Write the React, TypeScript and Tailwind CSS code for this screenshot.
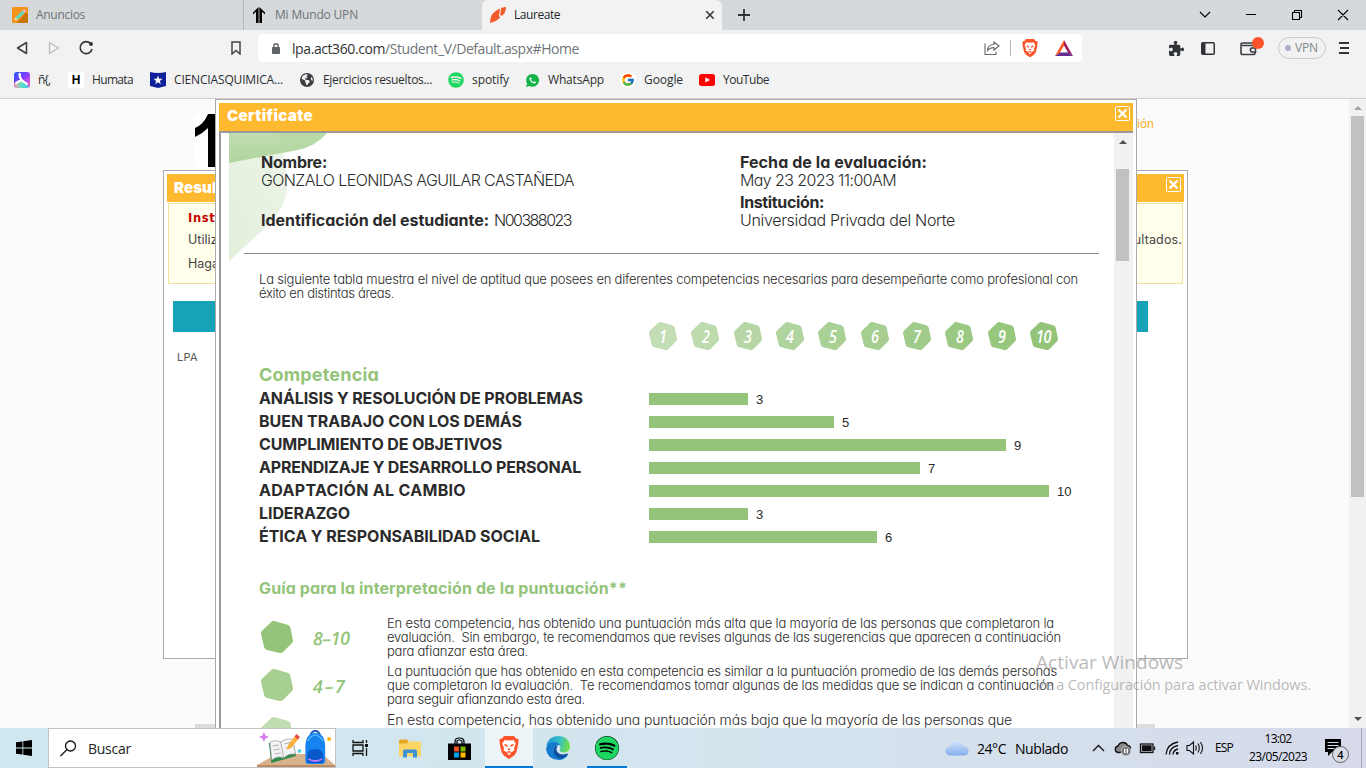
import { useLayoutEffect, useRef, type ReactNode } from "react";
import { FaPuzzlePiece, FaSpotify, FaEarthAmericas } from "react-icons/fa6";
import { IoLogoWhatsapp } from "react-icons/io";
import { FcGoogle } from "react-icons/fc";

/* Text set to a fixed measure: spacing between letters is computed from the natural width. */
function Fit({ w, className = "", children }: { w: number; className?: string; children: string }) {
  const ref = useRef<HTMLSpanElement>(null);
  useLayoutEffect(() => {
    const el = ref.current;
    if (!el) return;
    el.style.letterSpacing = "0px";
    const natural = el.getBoundingClientRect().width;
    el.style.letterSpacing = `${(w - natural) / children.length}px`;
  }, [w, children]);
  return (
    <span ref={ref} className={`inline-block w-max shrink-0 whitespace-pre ${className}`}>
      {children}
    </span>
  );
}

const UI = "font-['Open_Sans',sans-serif]";
const GEO = "font-['Inter',sans-serif] [font-feature-settings:'cv11']";

function BraveLion({ size }: { size: number }) {
  return (
    <svg width={size} height={size * 1.15} viewBox="0 0 20 23">
      <path d="M5 0h10l2 2.500 2.500.5-.3 5-1.700 8-2.200 3.500L10 23l-5.300-3.500L2.500 16 .8 8 .5 3 3 2.500z" fill="#fb542b" />
      <path d="M5.500 4l3 .6L10 4.300l1.500.3 3-.6 2.300 3.700-1.800 4.200.5 2.300-3.200 2L10 19.500l-2.300-3.300-3.200-2 .5-2.300L3.200 7.700z" fill="#fff" />
      <path d="M5 8l3.300.8.500 2.200-2.800-.9zM15 8l-3.300.8-.5 2.200 2.800-.9zM8.300 13l1.700-.8 1.700.8-1.700 1.500zM7.500 16l2.500-1 2.500 1-2.500 1.300z" fill="#fb542b" />
    </svg>
  );
}

function CloseX() {
  return (
    <svg width="15" height="15" viewBox="0 0 15 15" fill="none" stroke="#fff">
      <rect x=".5" y=".5" width="14" height="14" rx="1" />
      <path d="M3.500 3.500l8 8M11.500 3.500l-8 8" strokeWidth="2.400" />
    </svg>
  );
}

function Hexagon({ size, fill }: { size: number; fill: string }) {
  return (
    <svg width={size} height={size} viewBox="0 0 32 32" className="block shrink-0">
      <path d="M13 4L25.500 7.500L28 19.500L19.500 28L7 25L4 12.500Z" fill={fill} stroke={fill} strokeWidth="8" strokeLinejoin="round" />
    </svg>
  );
}

function Tabs() {
  return (
    <div className={`flex h-[30px] bg-[#d5d9dc] text-[12px] leading-[30px] ${UI}`}>
      <div className="flex w-[244px] items-center border-r border-[#b4b8bb] pl-3 text-[#6f7376]">
        <svg width="16" height="16" viewBox="0 0 16 16">
          <rect width="16" height="16" rx="1.500" fill="#f7931a" />
          <path d="M5 16l9-11 2 2v9z" fill="#c87408" />
          <path d="M2.500 13.500l1-3.300L10.500 3.500l2.200 2.200-7 6.800z" fill="#62d6c4" />
          <path d="M10.500 3.500l1.200-1q1-.3 1.700.5t.4 1.600l-1.100 1.100z" fill="#ffb6c9" />
          <path d="M2.500 13.500l1-3.300 2.200 2.300z" fill="#ffe1b0" />
        </svg>
        <Fit w={49} className="ml-2">Anuncios</Fit>
      </div>
      <div className="flex w-[238px] items-center pl-[9px] text-[#6f7376]">
        <svg width="12" height="16" viewBox="0 0 12 16">
          <path d="M0 5.500L5.600 0v16H3V4.800L0 7.500zM12 5.500L6.400 0v16H9V4.800l3 2.700z" fill="#000" />
        </svg>
        <Fit w={83} className="ml-[10px]">Mi Mundo UPN</Fit>
      </div>
      <div className="flex w-[240px] items-center rounded-t-md bg-[#f2f2f2] pl-2 pr-2 text-[#25282a]">
        <svg width="16" height="16" viewBox="0 0 16 16">
          <path d="M0 16Q0 8 5 4.500Q8.500 2 10 1.500L9 9.500L10.500 10Q7 14.500 0 16z" fill="#f15a29" />
          <path d="M11 1Q14 0 16 0Q16 5 12.500 8.500L10.300 8.500z" fill="#f15a29" />
        </svg>
        <Fit w={46} className="ml-2">Laureate</Fit>
        <svg width="8" height="8" viewBox="0 0 8 8" className="ml-auto" stroke="#333" strokeWidth="1.500">
          <path d="M0 0l8 8M8 0l-8 8" />
        </svg>
      </div>
      <div className="flex flex-1 items-center pl-4">
        <svg width="12" height="12" viewBox="0 0 12 12" stroke="#333" strokeWidth="1.800">
          <path d="M6 0v12M0 6h12" />
        </svg>
        <svg width="166" height="14" viewBox="0 0 166 14" className="ml-auto mr-[16px]" fill="none" stroke="#000" strokeWidth="1.100">
          <path d="M16 4l5 5 5-5M62 6.500h10M108.500 4.500h7v7h-7zM110.500 4.500v-2h7v7h-2M154 2l10 10M164 2l-10 10" />
        </svg>
      </div>
    </div>
  );
}

function Toolbar() {
  return (
    <div className={`flex h-9 items-center bg-[#f2f2f2] ${UI}`}>
      <svg width="94" height="18" viewBox="0 0 94 18" fill="none" strokeLinejoin="round">
        <path d="M26.500 3.500v11L17.500 9z" stroke="#3b3e42" strokeWidth="1.500" />
        <path d="M49.500 3.500v11l9-5.500z" stroke="#bdbdbd" strokeWidth="1.300" />
        <path d="M90.500 4.500A6 6 0 1 0 92 10" stroke="#333" strokeWidth="1.600" />
        <circle cx="91" cy="5" r="1.900" fill="#333" />
      </svg>
      <svg width="10" height="14" viewBox="0 0 10 14" className="ml-[137px]" fill="none" stroke="#444" strokeWidth="1.500">
        <path d="M1 1h8v12L5 9.500 1 13z" />
      </svg>
      <div className="ml-[17px] flex h-7 w-[824px] items-center rounded bg-white pl-[14px] text-[14px]">
        <svg width="8" height="11" viewBox="0 0 8 11">
          <path d="M1.800 5V3a2.200 2.200 0 0 1 4.400 0v2" fill="none" stroke="#5f6368" strokeWidth="1.400" />
          <rect y="4" width="8" height="7" rx=".8" fill="#5f6368" />
        </svg>
        <Fit w={93} className="ml-3 text-[#303235]">lpa.act360.com</Fit>
        <Fit w={194} className="text-[#70757a]">/Student_V/Default.aspx#Home</Fit>
        <svg width="16" height="14" viewBox="0 0 16 14" className="ml-auto" fill="none" stroke="#666" strokeWidth="1.100">
          <path d="M1 2.500v11h11v-3M3.500 9.500Q4 3.500 10 3.500V1l5 4-5 4V6.500Q6 6.500 3.500 9.500z" />
        </svg>
        <div className="ml-[10px] h-4 w-px bg-[#b5b5b5]" />
        <div className="ml-[11px]"><BraveLion size={16} /></div>
        <svg width="18" height="16" viewBox="0 0 18 16" className="ml-[17px] mr-[9px]">
          <path d="M9 0L0 16l5-3.500 4-7z" fill="#ff5a24" />
          <path d="M9 0l9 16-5-3.500-4-7z" fill="#9e1f63" />
          <path d="M0 16l5-3.500h8l5 3.500z" fill="#662d91" />
        </svg>
      </div>
      <FaPuzzlePiece size={15} color="#303438" className="ml-[87px]" />
      <svg width="14" height="13" viewBox="0 0 14 13" className="ml-[17px]">
        <rect x=".75" y=".75" width="12.500" height="11.500" rx="1" fill="none" stroke="#303438" strokeWidth="1.500" />
        <path d="M1 1h3.500v11H1z" fill="#303438" />
      </svg>
      <svg width="25" height="20" viewBox="0 0 25 20" className="mb-1 ml-[25px]" fill="none" stroke="#3b3e42" strokeWidth="1.600">
        <path d="M15 8.500V7H3Q1 7 1 8.500V17q0 1.500 2 1.500h10q2 0 2-1.500v-1M2 9.500h11q2 0 2 2M15.500 12h-4a2.300 2.300 0 0 0 0 4h4z" />
        <circle cx="18" cy="7" r="6" fill="#fb542b" stroke="none" />
      </svg>
      <div className="ml-[13px] flex h-[22px] w-12 items-center rounded-full border border-[#ccc] pl-1.5 text-[12px] text-[#84888c]">
        <div className="h-1.5 w-1.5 rounded-full bg-[#aeb1c5]" />
        <Fit w={23} className="ml-1">VPN</Fit>
      </div>
      <svg width="10" height="12" viewBox="0 0 10 12" className="ml-[13px]" stroke="#333" strokeWidth="1.800">
        <path d="M0 1h10M1 6h9M0 11h10" />
      </svg>
    </div>
  );
}

function Bookmark({ icon, label, w, pad }: { icon: ReactNode; label: string; w: number; pad: string }) {
  return (
    <div className={`flex items-center ${pad}`}>
      <div className="mr-2 flex w-4 justify-center">{icon}</div>
      <Fit w={w}>{label}</Fit>
    </div>
  );
}

function Bookmarks() {
  return (
    <div className={`flex h-[33px] items-center border-b border-[#d0d0d0] bg-[#f2f2f2] pb-1 pl-[14px] text-[12px] text-[#2c2f31] ${UI}`}>
      <Bookmark
        pad="mr-[18px]" w={12} label="ñ{,"
        icon={
          <svg width="16" height="16" viewBox="0 0 16 16">
            <defs>
              <linearGradient id="clockWarm" x1="0" y1="0" x2="1" y2="1">
                <stop offset="0" stopColor="#1b5cff" /><stop offset=".5" stopColor="#8a3bff" /><stop offset="1" stopColor="#ff6bb5" />
              </linearGradient>
              <linearGradient id="clockCool" x1="0" y1="0" x2="1" y2="0">
                <stop offset="0" stopColor="#ff9ab0" /><stop offset=".5" stopColor="#5be0c0" /><stop offset="1" stopColor="#35c8f0" />
              </linearGradient>
            </defs>
            <rect width="16" height="16" rx="3" fill="url(#clockWarm)" />
            <path d="M0 11.500L7 8.500l8 6q-1 1.500-3 1.500H3q-3 0-3-4.500z" fill="url(#clockCool)" />
            <path d="M5.500 1Q5.500 6 8 8.500 4 9 1.500 11.500M8 8.500l5.500 4" stroke="#fff" strokeWidth="2.200" fill="none" />
          </svg>
        }
      />
      <Bookmark
        pad="mr-[17px]" w={41} label="Humata"
        icon={<div className="h-4 w-4 bg-white text-center font-['Liberation_Sans',sans-serif] text-[12px] font-bold leading-4 text-black">H</div>}
      />
      <Bookmark
        pad="mr-[16px]" w={109} label="CIENCIASQUIMICA..."
        icon={
          <svg width="16" height="16" viewBox="0 0 16 16" className="shrink-0">
            <path d="M0 0q8 2 16 0v14l-8 2-8-2z" fill="#10209a" />
            <path d="M8 3.500l1.200 3.200 3.300.1-2.600 2.100.9 3.300L8 10.300l-2.800 1.900.9-3.300-2.600-2.100 3.300-.1z" fill="#fff" />
          </svg>
        }
      />
      <Bookmark pad="mr-[16px]" w={109} label="Ejercicios resueltos..." icon={<FaEarthAmericas size={14} color="#3a3d40" />} />
      <Bookmark pad="mr-[15px]" w={37} label="spotify" icon={<FaSpotify size={16} color="#1ed760" />} />
      <Bookmark pad="mr-[16px]" w={56} label="WhatsApp" icon={<IoLogoWhatsapp size={15} color="#12b347" />} />
      <Bookmark
        pad="mr-[16px]" w={39} label="Google"
        icon={<div className="shrink-0 rounded-full bg-white p-[1px]"><FcGoogle size={14} /></div>}
      />
      <Bookmark
        pad="" w={46} label="YouTube"
        icon={
          <svg width="16" height="12" viewBox="0 0 16 12" className="shrink-0">
            <rect width="16" height="12" rx="2.500" fill="#f00" /><path d="M6.300 3.300v5.200L11 6z" fill="#fff" />
          </svg>
        }
      />
    </div>
  );
}

function Arrow({ down = false, color }: { down?: boolean; color: string }) {
  return (
    <svg width="8" height="4" viewBox="0 0 8 4" className="block">
      <path d={down ? "M0 0h8L4 4z" : "M0 4h8L4 0z"} fill={color} />
    </svg>
  );
}

function ResultsPage() {
  return (
    <div className="flex h-full bg-[#fbfbfb]">
      <div className="flex-1">
        <div className="flex h-[71px] items-start pl-[195px] pt-[15px]">
          <svg width="21" height="53" viewBox="0 0 21 53" className="bg-white">
            <path d="M0 14Q9 10 13 0h8v53h-8V14Q7 20 0 23z" fill="#000" />
          </svg>
          <Fit w={30} className="ml-[908px] font-['Roboto',sans-serif] text-[12.500px] leading-[20px] text-[#f9b233]">esión</Fit>
        </div>
        <div className="ml-[163px] flex h-[489px] w-[1025px] flex-col border border-[#aaa] bg-white p-[3px]">
          <div className="flex h-7 shrink-0 items-center justify-between bg-[#ffb92f] pl-[7px] pr-[3px]">
            <Fit w={86} className="font-['Inter',sans-serif] text-[15px] font-black leading-6 text-white">Resultados</Fit>
            <div className="mb-[7px]"><CloseX /></div>
          </div>
          <div className="mx-px mt-px h-[81px] shrink-0 border border-[#f0e29a] bg-[#ffffec] pl-[19px] text-[#444]">
            <Fit w={50} className="block h-[23px] font-['DejaVu_Sans',sans-serif] text-[11.500px] font-bold leading-[27px] text-[#c60000]">Instruc</Fit>
            <div className="flex h-6 justify-between font-['Inter',sans-serif] text-[12.500px] leading-6">
              <span>Utilizar</span>
              <Fit w={67}>resultados.</Fit>
            </div>
            <div className="font-['Inter',sans-serif] text-[12.500px] leading-6">Haga clic</div>
          </div>
          <div className="ml-[6px] mt-[17px] h-[31px] w-[975px] shrink-0 bg-[#18a2b8]" />
          <Fit w={21} className="ml-[10px] mt-4 font-['Inter',sans-serif] text-[11px] leading-[18px] text-[#555]">LPA</Fit>
        </div>
        <div className="ml-[195px] mt-[65px] h-1 w-[960px] bg-[#ddd]" />
      </div>
      <div className="flex w-[17px] flex-col items-center bg-[#f1f1f1] pt-[7px]">
        <Arrow color="#a3a3a3" />
        <div className="mt-[6px] h-[381px] w-[13px] bg-[#c1c1c1]" />
        <div className="mb-[7px] mt-auto"><Arrow down color="#505050" /></div>
      </div>
    </div>
  );
}

const scale = ["#c3deb5", "#bddbad", "#b6d7a5", "#b0d49d", "#a9d196", "#a5ce90", "#a0cb8a", "#9bc983", "#97c67d", "#93c47a"];

const skills = [
  { name: "ANÁLISIS Y RESOLUCIÓN DE PROBLEMAS", w: 324, bar: 99, score: 3 },
  { name: "BUEN TRABAJO CON LOS DEMÁS", w: 263, bar: 185, score: 5 },
  { name: "CUMPLIMIENTO DE OBJETIVOS", w: 243, bar: 357, score: 9 },
  { name: "APRENDIZAJE Y DESARROLLO PERSONAL", w: 322, bar: 271, score: 7 },
  { name: "ADAPTACIÓN AL CAMBIO", w: 207, bar: 400, score: 10 },
  { name: "LIDERAZGO", w: 91, bar: 99, score: 3 },
  { name: "ÉTICA Y RESPONSABILIDAD SOCIAL", w: 281, bar: 228, score: 6 },
];

const bands = [
  {
    range: "8–10", w: 37, fill: "#93c47a",
    lines: [
      ["En esta competencia, has obtenido una puntuación más alta que la mayoría de las personas que completaron la", 667],
      ["evaluación.  Sin embargo, te recomendamos que revises algunas de las sugerencias que aparecen a continuación", 674],
      ["para afianzar esta área.", 141],
    ] as [string, number][],
  },
  {
    range: "4–7", w: 34, fill: "#a7cf92",
    lines: [
      ["La puntuación que has obtenido en esta competencia es similar a la puntuación promedio de las demás personas", 670],
      ["que completaron la evaluación.  Te recomendamos tomar algunas de las medidas que se indican a continuación", 667],
      ["para seguir afianzando esta área.", 198],
    ] as [string, number][],
  },
];

function Report() {
  return (
    <div className={`relative h-full flex-1 overflow-hidden bg-white text-[#2b2b2b] ${GEO}`}>
      <svg width="100" height="128" viewBox="0 0 100 128" className="absolute left-2 top-0">
        <defs>
          <linearGradient id="leafA" x1="0" y1="0" x2="0" y2="1"><stop offset="0" stopColor="#bfddb0" /><stop offset="1" stopColor="#b0d59e" /></linearGradient>
          <linearGradient id="leafB" x1="1" y1="0" x2="0" y2="1"><stop offset="0" stopColor="#edf5e9" /><stop offset="1" stopColor="#e2efdb" /></linearGradient>
        </defs>
        <path d="M0 0h48Q58 28 58 55Q57 75 36 95L0 128z" fill="url(#leafB)" />
        <path d="M0 0h98Q86 14 68 17L0 30z" fill="url(#leafA)" />
        <path d="M48 0h50Q86 14 68 17L54 20z" fill="#b2d6a0" fillOpacity=".45" />
      </svg>
      <div className="relative">
        <div className="flex h-[120px] items-start pl-10 pt-5 text-[16px] leading-[18px]">
          <div className="flex w-[479px] flex-col items-start">
            <Fit w={66} className="font-bold">Nombre:</Fit>
            <Fit w={313} className="font-light">GONZALO LEONIDAS AGUILAR CASTAÑEDA</Fit>
            <div className="mt-[22px] flex">
              <Fit w={228} className="font-bold">Identificación del estudiante:</Fit>
              <Fit w={77} className="ml-[5px] font-light">N00388023</Fit>
            </div>
          </div>
          <div className="flex flex-col items-start">
            <Fit w={187} className="font-bold">Fecha de la evaluación:</Fit>
            <Fit w={156} className="font-light">May 23 2023 11:00AM</Fit>
            <Fit w={84} className="mt-1 font-bold">Institución:</Fit>
            <Fit w={215} className="font-light">Universidad Privada del Norte</Fit>
          </div>
        </div>
        <div className="ml-[23px] h-px w-[855px] bg-[#888]" />
        <div className="ml-[38px] mt-[18px] flex flex-col items-start text-[13px] font-light leading-[14px]">
          <Fit w={819}>La siguiente tabla muestra el nivel de aptitud que posees en diferentes competencias necesarias para desempeñarte como profesional con</Fit>
          <Fit w={135}>éxito en distintas áreas.</Fit>
        </div>
        <div className="ml-[428px] mt-[22px] flex w-[409px] justify-between">
          {scale.map((fill, i) => (
            <div key={fill} className="grid h-7 w-7 grid-rows-[28px] place-items-center">
              <div className="col-start-1 row-start-1"><Hexagon size={28} fill={fill} /></div>
              <span className="col-start-1 row-start-1 scale-x-[.8] pt-px font-['Open_Sans',sans-serif] text-[18px] font-semibold italic leading-[27px] tracking-tight text-white">{i + 1}</span>
            </div>
          ))}
        </div>
        <div className="ml-[38px] mt-[14px] flex flex-col items-start">
          <Fit w={120} className="mb-px text-[18px] font-bold leading-[22px] text-[#93c47a]">Competencia</Fit>
          {skills.map((s) => (
            <div key={s.name} className="flex h-[23px] items-center">
              <div className="flex w-[390px]">
                <Fit w={s.w} className="text-[16px] font-bold leading-[23px]">{s.name}</Fit>
              </div>
              <div className="mt-px h-3 bg-[#93c47a]" style={{ width: s.bar }} />
              <span className="ml-2 mt-[3px] font-['Liberation_Sans',sans-serif] text-[13px] leading-5">{s.score}</span>
            </div>
          ))}
          <Fit w={368} className="mt-[30px] text-[16px] font-bold leading-[20px] text-[#93c47a]">Guía para la interpretación de la puntuación**</Fit>
        </div>
        <div className="ml-10 mt-[18px] flex flex-col">
          {bands.map((b) => (
            <div key={b.range} className="flex h-12">
              <div className="mt-[5px]"><Hexagon size={32} fill={b.fill} /></div>
              <div className="ml-5 w-[74px]">
                <Fit w={b.w} className="mt-[8px] -rotate-1 font-['Open_Sans',sans-serif] text-[18px] font-semibold italic leading-7 text-[#93c47a]">{b.range}</Fit>
              </div>
              <div className="flex flex-col items-start text-[13px] font-light leading-[14px]">
                {b.lines.map(([t, w]) => <Fit key={t} w={w}>{t}</Fit>)}
              </div>
            </div>
          ))}
          <div className="flex">
            <div className="mt-[5px]"><Hexagon size={32} fill="#c0ddb1" /></div>
            <Fit w={625} className="ml-[94px] text-[14px] font-light leading-4">En esta competencia, has obtenido una puntuación más baja que la mayoría de las personas que</Fit>
          </div>
        </div>
      </div>
    </div>
  );
}

function CertificateWindow() {
  return (
    <div className="absolute left-[215px] top-0 flex h-full w-[922px] flex-col overflow-hidden border-x border-t border-[#aaa] bg-white px-[3px] pt-[3px]">
      <div className="flex h-7 shrink-0 items-center justify-between bg-[#ffb92f] pl-2 pr-[3px]">
        <Fit w={86} className="mb-0.5 font-['Inter',sans-serif] text-[15px] font-black leading-6 text-white">Certificate</Fit>
        <div className="mb-[7px]"><CloseX /></div>
      </div>
      <div className="flex min-h-0 flex-1 border-l-2 border-t-2 border-[#999]">
        <Report />
        <div className="flex w-[19px] shrink-0 flex-col items-center bg-[#f1f1f1] pr-[2px] pt-[7px]">
          <Arrow color="#505050" />
          <div className="mt-[25px] h-[92px] w-[13px] bg-[#c1c1c1]" />
        </div>
      </div>
    </div>
  );
}

function Taskbar() {
  return (
    <div className={`flex h-10 bg-gradient-to-r from-[#cfe7ef] via-[#d3e5ee] to-[#d6daea] text-black ${UI}`}>
      <div className="flex w-12 items-center justify-center">
        <svg width="16" height="16" viewBox="0 0 16 16">
          <path d="M0 2.300L6.500 1.400v6.200H0zM7.300 1.300L16 0v7.600H7.300zM0 8.400h6.500v6.200L0 13.700zM7.300 8.400H16V16l-8.700-1.300z" />
        </svg>
      </div>
      <div className="flex w-72 items-center border border-[#c4c4c4] bg-white pl-[11px] text-[14px]">
        <svg width="17" height="17" viewBox="0 0 17 17" fill="none" stroke="#111" strokeWidth="1.300">
          <circle cx="10.500" cy="6" r="5" /><path d="M7 9.500L.5 16" />
        </svg>
        <Fit w={43} className="ml-[11px] text-[#222]">Buscar</Fit>
        <svg width="78" height="38" viewBox="0 0 79 38" preserveAspectRatio="none" className="ml-auto self-end">
          <path d="M0 36L20 25h46l13 11v2H0z" fill="#d8b28a" />
          <path d="M0 36h79v2H0z" fill="#b98b62" />
          <path d="M7 3l1.500 3.500L12 8l-3.500 1.500L7 13 5.500 9.500 2 8l3.500-1.500z" fill="#d77af0" />
          <path d="M12 14l2.500 20 25-7-2.500-14z" fill="#2e8b4b" />
          <path d="M13 13q6-3 11 0 5-4 12-3l3 15q-7-1-12 4-6-3-12 2z" fill="#f4f4f6" stroke="#9a9aa5" strokeWidth=".7" />
          <path d="M24 13l3 16M16 17l6-1M17 21l6-1M18 25l6-1M28 15l7-2M29 19l7-2" stroke="#999" strokeWidth=".8" />
          <path d="M30 21l1.500-5 7-9 3.500 3-7.500 9z" fill="#fbb03b" /><path d="M38 7.500l2-2.500 3.500 3-2 2.500z" fill="#e5484d" />
          <circle cx="43" cy="22" r="2" fill="#5fd0e8" /><circle cx="73" cy="10" r="2" fill="#ffb300" />
          <path d="M54 7q1-5 5-5t5 5" fill="none" stroke="#1b55b8" strokeWidth="1.800" />
          <path d="M49 18q0-14 10-14t10 14v14q0 3-3 3H52q-3 0-3-3z" fill="#1683f0" />
          <path d="M51 12q8-12 16 0" fill="none" stroke="#5cc5ff" strokeWidth="1.200" />
          <path d="M51 27q0-7 8-7t8 7v5q0 2-2 2H53q-2 0-2-2z" fill="#0758c9" />
          <path d="M52 30q7 4 14 0" stroke="#c078ff" strokeWidth="1.800" fill="none" />
        </svg>
      </div>
      <div className="flex w-[49px] items-center justify-center">
        <svg width="17" height="16" viewBox="0 0 17 16" fill="none" stroke="#111" strokeWidth="1.300">
          <path d="M1 0v2.500h10V0M1 16v-2.500h10V16M1 5h10v6H1zM14.500 0v3M14.500 8v8" />
          <path d="M13 4h3v3h-3z" fill="#111" stroke="none" />
        </svg>
      </div>
      <div className="flex w-[50px] items-center justify-center">
        <svg width="22" height="19" viewBox="0 0 22 19">
          <path d="M0 2q0-1.500 1.500-1.500H8L10 3v14H0z" fill="#e8a620" />
          <path d="M0 4.500h7.500L10 2.500h11Q22 2.500 22 4v12.500q0 1-1 1H0z" fill="#fcd565" />
          <path d="M4 18.500V12q0-1.500 1.500-1.500h11Q18 10.500 18 12v6.500h-4V14H8v4.500z" fill="#3d92d6" />
        </svg>
      </div>
      <div className="flex w-[50px] items-center justify-center pr-0.5">
        <svg width="23" height="23" viewBox="0 0 23 23">
          <path d="M7 7V4.500Q7 1 11.500 1T16 4.500V7M9 7V4Q11.500 2 14 4v3" fill="none" stroke="#000" strokeWidth="1.200" />
          <path d="M0 6.500h23V23H0z" />
          <path d="M6 9.500h5v5H6z" fill="#f25022" /><path d="M12.500 9.500h5v5h-5z" fill="#7fba00" />
          <path d="M6 15.500h5v5H6z" fill="#00a4ef" /><path d="M12.500 15.500h5v5h-5z" fill="#ffb900" />
        </svg>
      </div>
      <div className="flex w-12 items-center justify-center border-b-2 border-[#0078d7] bg-[#ecf4f8]">
        <BraveLion size={20} />
      </div>
      <div className="flex w-[50px] items-center justify-center">
        <svg width="24" height="24" viewBox="0 0 24 24">
          <defs>
            <linearGradient id="edge" x1="0" y1="0" x2="1" y2=".2"><stop offset="0" stopColor="#1f8fd8" /><stop offset=".6" stopColor="#35c1c8" /><stop offset="1" stopColor="#70dd4d" /></linearGradient>
          </defs>
          <path d="M.5 10Q2 0 12.500 0T24 10.500Q24 16 18 16.500 13 16.500 14 13.500 15.500 10 12 8.500 5 5 .5 10z" fill="url(#edge)" />
          <path d="M0 13Q1 6 8 6q4 0 6 3-6-.5-6.500 5Q8 21 16 20.500q4 0 6-1.500-3.500 5-9.500 5Q1 23 0 13z" fill="#1479cf" />
          <path d="M7.500 14Q8 9 12 9.500 9.500 12 11 15.500 14 20 21.500 17.500l.5 1q-3.500 4.500-9 3.500-5.500-2-5.500-8z" fill="#0b4f9e" />
        </svg>
      </div>
      <div className="ml-1 flex w-10 items-center justify-center border-b-2 border-[#0078d7]">
        <div className="mt-0.5 rounded-full bg-black"><FaSpotify size={24} color="#1ed760" /></div>
      </div>
      <div className="ml-auto flex items-center text-[14px]">
        <svg width="24" height="16" viewBox="0 0 24 16">
          <defs><linearGradient id="cloud" x1="0" y1="0" x2="0" y2="1"><stop offset="0" stopColor="#d5e5fb" /><stop offset="1" stopColor="#83aeec" /></linearGradient></defs>
          <path d="M5 15.500a4.600 4.600 0 0 1 0-9.200Q7 .5 12 .5q5 .2 6 5.500 5.500 0 5.500 5 0 4.500-5 4.500z" fill="url(#cloud)" />
        </svg>
        <Fit w={29} className="ml-2">24°C</Fit>
        <Fit w={53} className="ml-[9px]">Nublado</Fit>
        <svg width="112" height="18" viewBox="0 0 112 18" className="ml-6" fill="none" stroke="#111" strokeWidth="1.300">
          <path d="M1 12l5.500-5.500L12 12" />
          <path d="M27.500 13.500H26a3.300 3.300 0 0 1 0-6.500Q27.500 3.500 31 3.500q3.500 0 4.500 3 2.500 0 3 2.500z" fill="#888" />
          <circle cx="34" cy="12" r="4.800" fill="#777" stroke="#ddd" strokeWidth=".6" /><path d="M32.700 9.800v4.400M35.300 9.800v4.400" stroke="#fff" />
          <rect x="48.500" y="5" width="12.500" height="8.500" /><path d="M50.500 7H59v4.500h-8.500z" fill="#111" /><path d="M62.500 7.500v3.500" />
          <path d="M74 15.500Q75 5 86 3M77.500 15.500Q78 8 86 6.500M81 15.500Q81.500 11 86 10" /><path d="M84 13h2.500v2.500H84z" fill="#111" stroke="none" />
          <path d="M95 6.500h2.500l4-3.500v12l-4-3.500H95zM103.500 6.500q1.500 2.500 0 5M106 4.500q2.500 4.500 0 9M108.500 3q4 6 0 12" strokeWidth="1.100" />
        </svg>
        <Fit w={18} className="ml-[11px] text-[12px]">ESP</Fit>
        <div className="ml-4 flex flex-col items-center text-[12px] leading-[18px]">
          <Fit w={27}>13:02</Fit>
          <Fit w={58}>23/05/2023</Fit>
        </div>
        <svg width="26" height="26" viewBox="0 0 26 26" className="ml-[17px] mr-[11px] mt-[6px]">
          <path d="M1 1h16v13H8l-4 4v-4H1z" /><path d="M3.500 4.500h11M3.500 7.500h11M3.500 10.500h7" stroke="#d6dcea" />
          <circle cx="16.500" cy="16.500" r="8" fill="#d8dce4" stroke="#666" />
          <text x="16.500" y="20.500" textAnchor="middle" className="font-['Open_Sans',sans-serif] text-[11px] font-semibold">4</text>
        </svg>
        <div className="mr-1 h-10 w-px bg-[#aab]" />
      </div>
    </div>
  );
}

export default function App() {
  return (
    <div className="flex h-[768px] w-[1366px] flex-col overflow-hidden">
      <Tabs />
      <Toolbar />
      <Bookmarks />
      <div className="relative h-[629px] overflow-hidden">
        <ResultsPage />
        <CertificateWindow />
        <div className={`absolute left-[1036px] top-[552px] flex flex-col items-start text-[#8a8a8a]/60 ${UI}`}>
          <Fit w={147} className="text-[19px] leading-[22px]">Activar Windows</Fit>
          <Fit w={275} className="text-[14.500px] leading-[24px]">Ve a Configuración para activar Windows.</Fit>
        </div>
      </div>
      <Taskbar />
    </div>
  );
}
